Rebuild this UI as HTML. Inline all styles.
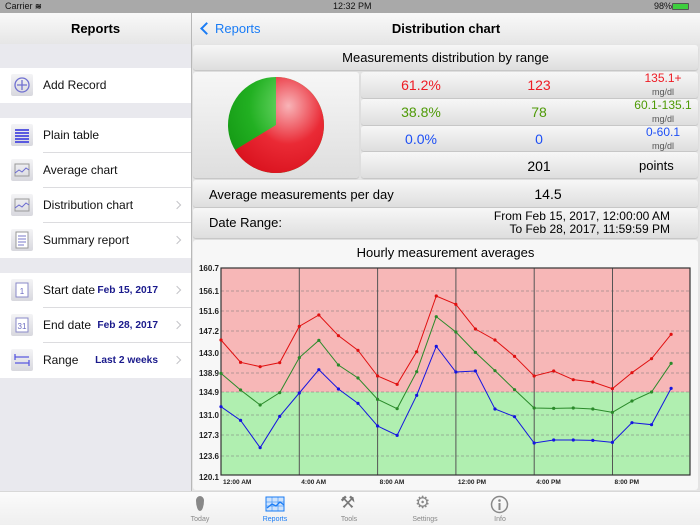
<!DOCTYPE html>
<html><head><meta charset="utf-8"><style>
*{margin:0;padding:0;box-sizing:border-box}
body{width:700px;height:525px;overflow:hidden;font-family:"Liberation Sans",Arial,sans-serif;background:#e9e9ee;position:relative}
.abs{position:absolute}
.status{left:0;top:0;width:700px;height:13px;background:#a9a9a9;font-size:9px;color:#111}
.nav{top:13px;height:31px;background:linear-gradient(#f9f9f9,#e6e6e6);font-size:13px;text-align:center;line-height:31px}
.lrow{left:0;width:191px;height:35px;background:#fff;font-size:12px;color:#111}
.lrow .ic{position:absolute;left:11px;top:6px;width:22px;height:22px;background:linear-gradient(#f4f4f6,#d8d8de);border-radius:2px}
.lrow .t{position:absolute;left:43px;top:0;line-height:35px}
.lrow .v{position:absolute;right:33px;top:0;line-height:35px;color:#1a1a8c;font-weight:bold;font-size:10.2px}
.lrow .ch{position:absolute;right:11px;top:14px;width:6px;height:6px;border-right:1.3px solid #c4c4c8;border-top:1.3px solid #c4c4c8;transform:rotate(45deg)}
.sep{position:absolute;left:43px;right:0;bottom:0;height:1px;background:#dcdcdf}
.cell{background:linear-gradient(#f7f7f7,#dedede);border-radius:3px;box-shadow:0 1px 1px rgba(0,0,0,.15)}
.c{font-size:14px;text-align:center}
.red{color:#ee1b24}.grn{color:#4e9a06}.blu{color:#1d4ff5}
.rg{position:absolute;left:260px;top:0;width:84px;text-align:center;font-size:12px;line-height:13px}
.u{font-size:9px;color:#555}
</style></head><body>
<div class="abs status"><span style="position:absolute;left:5px;top:1px">Carrier <b style="font-size:8px">≋</b></span><span style="position:absolute;left:333px;top:1px">12:32 PM</span><span style="position:absolute;left:654px;top:1px">98%</span><span style="position:absolute;left:672px;top:3px;width:17px;height:7px;border:1px solid #555;border-radius:1px;background:#3ecf3e"></span></div>
<div class="abs nav" style="left:0;width:191px;font-weight:bold">Reports</div>
<div class="abs" style="left:191px;top:13px;width:1px;height:478px;background:#b8b8b8"></div>
<div class="abs nav" style="left:192px;width:508px;font-weight:bold"><span style="position:absolute;left:10px;color:#1a7cf5;font-weight:normal"><span style="display:inline-block;width:9px;height:9px;border-left:2px solid #1a7cf5;border-bottom:2px solid #1a7cf5;transform:rotate(45deg);margin-right:4px"></span>Reports</span>Distribution chart</div>

<div class="abs lrow" style="top:68px"><div class="ic"><svg width="22" height="22"><circle cx="11" cy="11" r="7" fill="none" stroke="#7070d0" stroke-width="1.3"/><path d="M11 6v10M6 11h10" stroke="#7070d0" stroke-width="1.3"/></svg></div><div class="t">Add Record</div></div>
<div class="abs lrow" style="top:118px"><div class="ic"><svg width="22" height="22"><path d="M4 6h14M4 9h14M4 12h14M4 15h14M4 18h14" stroke="#5a5ae0" stroke-width="2"/></svg></div><div class="t">Plain table</div><div class="sep"></div></div>
<div class="abs lrow" style="top:153px"><div class="ic"><svg width="22" height="22"><rect x="4" y="5" width="14" height="12" fill="none" stroke="#999"/><path d="M4 14l4-3 3 2 4-4 3 2" stroke="#6a6ad0" fill="none"/></svg></div><div class="t">Average chart</div><div class="sep"></div></div>
<div class="abs lrow" style="top:188px"><div class="ic"><svg width="22" height="22"><rect x="4" y="5" width="14" height="12" fill="none" stroke="#999"/><path d="M4 14l4-3 3 2 4-4 3 2" stroke="#6a6ad0" fill="none"/></svg></div><div class="t">Distribution chart</div><div class="ch"></div><div class="sep"></div></div>
<div class="abs lrow" style="top:223px"><div class="ic"><svg width="22" height="22"><rect x="5" y="3" width="12" height="16" fill="#fff" stroke="#999"/><path d="M7 7h8M7 10h8M7 13h8M7 16h6" stroke="#7a7ac8"/></svg></div><div class="t">Summary report</div><div class="ch"></div></div>
<div class="abs lrow" style="top:273px"><div class="ic"><svg width="22" height="22"><rect x="5" y="4" width="12" height="14" fill="#fff" stroke="#8a8ac8"/><text x="11" y="15" font-size="8" text-anchor="middle" fill="#6a6ac0">1</text></svg></div><div class="t">Start date</div><div class="v">Feb 15, 2017</div><div class="ch"></div><div class="sep"></div></div>
<div class="abs lrow" style="top:308px"><div class="ic"><svg width="22" height="22"><rect x="5" y="4" width="12" height="14" fill="#fff" stroke="#8a8ac8"/><text x="11" y="15" font-size="8" text-anchor="middle" fill="#6a6ac0">31</text></svg></div><div class="t">End date</div><div class="v">Feb 28, 2017</div><div class="ch"></div><div class="sep"></div></div>
<div class="abs lrow" style="top:343px"><div class="ic"><svg width="22" height="22"><path d="M4 5v6M4 8h14M18 11v6M4 14h14" stroke="#5a5ae0" stroke-width="1.3" fill="none"/></svg></div><div class="t">Range</div><div class="v">Last 2 weeks</div><div class="ch"></div></div>

<div class="abs" style="left:192px;top:44px;width:508px;height:447px;background:#e4e4e4"></div>
<div class="abs cell c" style="left:193px;top:45px;width:505px;height:25px;line-height:25px;font-size:13px">Measurements distribution by range</div>
<div class="abs cell" style="left:193px;top:72px;width:166px;height:106px">
<svg width="166" height="106"><defs><radialGradient id="rg" cx="0.6" cy="0.3" r="0.8"><stop offset="0" stop-color="#f8b4b8"/><stop offset="0.5" stop-color="#ea2a35"/><stop offset="1" stop-color="#d8101c"/></radialGradient><radialGradient id="gg" cx="0.7" cy="0.3" r="0.8"><stop offset="0" stop-color="#7ee07a"/><stop offset="0.6" stop-color="#22b022"/><stop offset="1" stop-color="#159a15"/></radialGradient></defs>
<circle cx="83" cy="53" r="48" fill="url(#gg)"/>
<path d="M83 53V5A48 48 0 1 1 42 78Z" fill="url(#rg)"/></svg></div>
<div class="abs cell" style="left:361px;top:72px;width:337px;height:26px"><span class="abs c red" style="left:30px;top:5px;width:60px">61.2%</span><span class="abs c red" style="left:148px;top:5px;width:60px">123</span><span class="rg red">135.1+<br><span class="u">mg/dl</span></span></div>
<div class="abs cell" style="left:361px;top:99px;width:337px;height:26px"><span class="abs c grn" style="left:30px;top:5px;width:60px">38.8%</span><span class="abs c grn" style="left:148px;top:5px;width:60px">78</span><span class="rg grn">60.1-135.1<br><span class="u">mg/dl</span></span></div>
<div class="abs cell" style="left:361px;top:126px;width:337px;height:25px"><span class="abs c blu" style="left:30px;top:5px;width:60px">0.0%</span><span class="abs c blu" style="left:148px;top:5px;width:60px">0</span><span class="rg blu">0-60.1<br><span class="u">mg/dl</span></span></div>
<div class="abs cell" style="left:361px;top:152px;width:337px;height:26px"><span class="abs c" style="left:148px;top:6px;width:60px">201</span><span class="abs" style="left:278px;top:6px;font-size:13px">points</span></div>
<div class="abs cell" style="left:193px;top:180px;width:505px;height:27px;font-size:13px"><span class="abs" style="left:16px;top:7px">Average measurements per day</span><span class="abs c" style="left:325px;top:6px;width:60px">14.5</span></div>
<div class="abs cell" style="left:193px;top:208px;width:505px;height:30px;font-size:12px"><span class="abs" style="left:16px;top:7px;font-size:13px">Date Range:</span><span class="abs" style="right:28px;top:2px;text-align:right;line-height:13px">From Feb 15, 2017, 12:00:00 AM<br>To Feb 28, 2017, 11:59:59 PM</span></div>
<div class="abs" style="left:193px;top:240px;width:505px;height:250px;background:#f7f7f7;border-radius:3px"></div>
<div class="abs c" style="left:193px;top:245px;width:505px;font-size:13px">Hourly measurement averages</div>
<svg class="abs" style="left:192px;top:260px" width="508" height="230" id="ch"></svg>

<div class="abs" style="left:0;top:491px;width:700px;height:34px;background:linear-gradient(#fbfbfb,#efefef);border-top:1px solid #d8d8d8;font-size:7px;color:#888;text-align:center">
<span class="abs" style="left:190px;top:24px;width:20px">Today</span>
<span class="abs" style="left:196px;top:4px;width:8px;height:15px;background:#888;border-radius:50% 50% 50% 50%/30% 30% 70% 70%"></span>
<span class="abs" style="left:259px;top:24px;width:32px;color:#1a7cf5">Reports</span>
<svg class="abs" style="left:265px;top:4px" width="20" height="16"><rect x="1" y="1" width="18" height="14" fill="#cfe3fb" stroke="#1a7cf5"/><path d="M1 6h18M1 10h18M7 1v14M13 1v14" stroke="#1a7cf5" stroke-width=".5"/><path d="M2 12l5-4 4 2 4-4 4 3" stroke="#1a7cf5" fill="none" stroke-width="1.3"/></svg>
<span class="abs" style="left:334px;top:24px;width:30px">Tools</span>
<span class="abs" style="left:340px;top:1px;font-size:17px;color:#777">⚒</span>
<span class="abs" style="left:408px;top:24px;width:34px">Settings</span>
<span class="abs" style="left:415px;top:1px;font-size:17px;color:#888">⚙</span>
<span class="abs" style="left:485px;top:24px;width:30px">Info</span>
<svg class="abs" style="left:490px;top:3px" width="19" height="19"><circle cx="9.5" cy="9.5" r="8" fill="none" stroke="#888" stroke-width="1.5"/><circle cx="9.5" cy="5.5" r="1.3" fill="#888"/><path d="M9.5 8v7" stroke="#888" stroke-width="2"/></svg>
</div>
<script>
var s='',X0=29,W=469,T=8,B=215,G=132;
s+='<rect x="'+X0+'" y="'+T+'" width="'+W+'" height="'+(G-T)+'" fill="#f7b7b7"/>';
s+='<rect x="'+X0+'" y="'+G+'" width="'+W+'" height="'+(B-G)+'" fill="#b0efb0"/>';
var labs=['160.7','156.1','151.6','147.2','143.0','138.9','134.9','131.0','127.3','123.6','120.1'];
var ys=[268,291,311,331,353,373,392,415,435,456,477];
for(var i=0;i<labs.length;i++){var y=ys[i]-260;if(i>0&&i<10)s+='<line x1="'+X0+'" x2="'+(X0+W)+'" y1="'+y+'" y2="'+y+'" stroke="#777" stroke-dasharray="3,2" stroke-width=".6"/>';s+='<text x="27" y="'+(y+3)+'" font-size="8" font-weight="bold" text-anchor="end" fill="#222">'+labs[i]+'</text>';}
var xl=['12:00 AM','4:00 AM','8:00 AM','12:00 PM','4:00 PM','8:00 PM'];
for(i=0;i<6;i++){var x=X0+i*78.3;if(i>0)s+='<line x1="'+x+'" x2="'+x+'" y1="'+T+'" y2="'+B+'" stroke="#555" stroke-width="1"/>';s+='<text x="'+(x+2)+'" y="'+(B+9)+'" font-size="6.5" font-weight="bold" fill="#222">'+xl[i]+'</text>';}
s+='<rect x="'+X0+'" y="'+T+'" width="'+W+'" height="'+(B-T)+'" fill="none" stroke="#333" stroke-width="1.2"/>';
var D=[['#e01010',[240,307,320,308,199,165,227,271,348,373,275,108,133,207,240,289,348,333,359,366,386,338,296,223]],
['#2a8a2a',[340,390,435,398,293,241,315,354,418,446,335,170,216,277,332,389,444,445,444,447,457,423,396,310]],
['#1515e0',[440,481,563,469,399,329,387,430,498,526,406,259,336,333,447,470,549,540,540,541,547,488,494,385]]];
D.forEach(function(d){var p='';d[1].forEach(function(v,j){var x=X0+j*19.57,y=v/3;p+=x+','+y+' ';s+='<circle cx="'+x+'" cy="'+y+'" r="1.6" fill="'+d[0]+'"/>';});s+='<polyline points="'+p+'" fill="none" stroke="'+d[0]+'" stroke-width="1"/>';});
document.getElementById('ch').innerHTML=s;
</script>
</body></html>
